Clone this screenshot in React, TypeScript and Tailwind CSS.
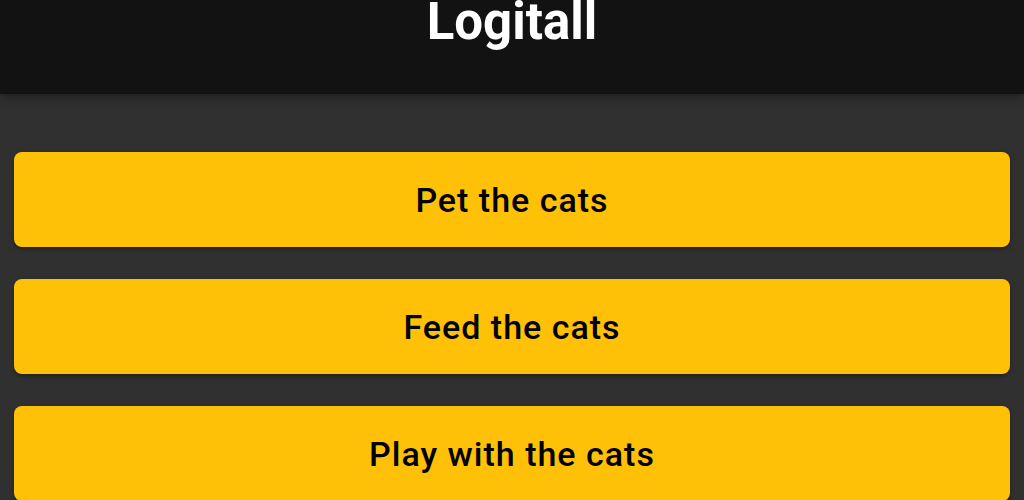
import React from "react";

export default function App() {
  const items = ["Pet the cats", "Feed the cats", "Play with the cats"];
  return (
    <div className="w-[1024px] h-[500px] overflow-hidden bg-[#303030] font-['Roboto',sans-serif]">
      <header className="relative z-10 h-[94px] bg-[#121212] shadow-[0_2px_10px_rgba(0,0,0,0.45)] flex justify-center">
        <h1 className="text-white text-[51px] leading-[52px] font-bold -mt-[4px]">Logitall</h1>
      </header>
      <main className="flex flex-col gap-[32px] px-[14px] pt-[58px]">
        {items.map((t) => (
          <button
            key={t}
            className="h-[95px] w-full rounded-[8px] bg-[#FFC107] text-black text-[34px] font-medium tracking-[1px] pt-[2px] shadow-[0_2px_4px_rgba(0,0,0,0.35)] flex items-center justify-center"
          >
            {t}
          </button>
        ))}
      </main>
    </div>
  );
}
